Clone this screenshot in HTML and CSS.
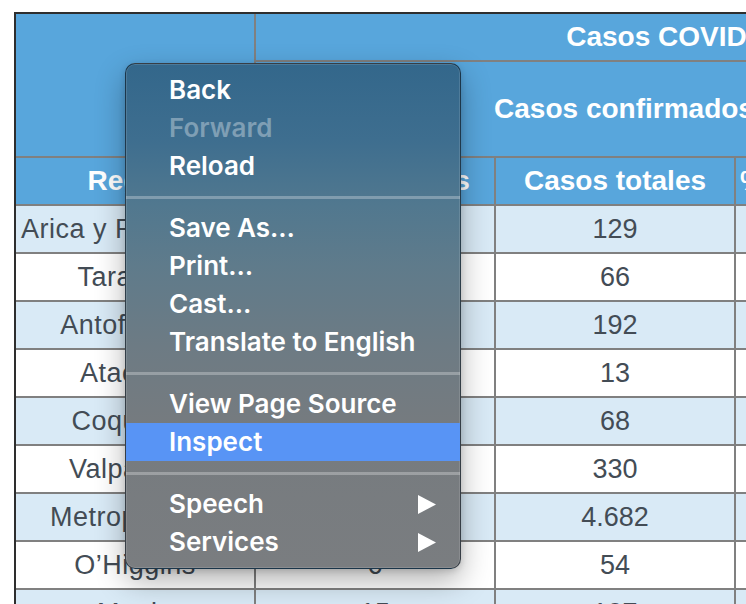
FILE: index.html
```html
<!DOCTYPE html>
<html lang="es">
<head>
<meta charset="utf-8">
<title>Casos COVID-19 en Chile</title>
<link rel="stylesheet" href="styles.css">
</head>
<body>
<table class="covid">
  <colgroup>
    <col class="c-region"><col class="c-std"><col class="c-std"><col class="c-pct"><col class="c-last">
  </colgroup>
  <thead>
    <tr class="row-h">
      <th rowspan="2"></th>
      <th colspan="4">Casos COVID-19 en Chile</th>
    </tr>
    <tr class="row-hh">
      <th colspan="3">Casos confirmados</th>
      <th>Fallecidos</th>
    </tr>
    <tr class="row-h">
      <th>Región</th>
      <th>Casos nuevos</th>
      <th>Casos totales</th>
      <th>% de casos totales</th>
      <th>Total</th>
    </tr>
  </thead>
  <tbody>
    <tr class="alt"><td class="reg">Arica y Parinacota</td><td>3</td><td>129</td><td>2,1</td><td>1</td></tr>
    <tr><td class="reg">Tarapacá</td><td>2</td><td>66</td><td>1,1</td><td>0</td></tr>
    <tr class="alt"><td class="reg">Antofagasta</td><td>12</td><td>192</td><td>3,1</td><td>1</td></tr>
    <tr><td class="reg">Atacama</td><td>0</td><td>13</td><td>0,2</td><td>0</td></tr>
    <tr class="alt"><td class="reg">Coquimbo</td><td>1</td><td>68</td><td>1,1</td><td>0</td></tr>
    <tr><td class="reg">Valparaíso</td><td>9</td><td>330</td><td>5,4</td><td>4</td></tr>
    <tr class="alt"><td class="reg">Metropolitana</td><td>290</td><td>4.682</td><td>76,5</td><td>48</td></tr>
    <tr><td class="reg">O’Higgins</td><td>6</td><td>54</td><td>0,9</td><td>0</td></tr>
    <tr class="alt"><td class="reg">Maule</td><td>15</td><td>107</td><td>1,7</td><td>2</td></tr>
  </tbody>
</table>

<div class="menu">
  <div class="item">Back</div>
  <div class="item disabled">Forward</div>
  <div class="item">Reload</div>
  <div class="sep"></div>
  <div class="item">Save As…</div>
  <div class="item">Print…</div>
  <div class="item">Cast…</div>
  <div class="item">Translate to English</div>
  <div class="sep"></div>
  <div class="item">View Page Source</div>
  <div class="item active">Inspect</div>
  <div class="sep"></div>
  <div class="item">Speech<svg class="arrow" width="18" height="19" viewBox="0 0 18 19"><polygon points="0,0 18,9.5 0,19" fill="#fff"/></svg></div>
  <div class="item">Services<svg class="arrow" width="18" height="19" viewBox="0 0 18 19"><polygon points="0,0 18,9.5 0,19" fill="#fff"/></svg></div>
</div>
</body>
</html>
```
FILE: styles.css
```css
html, body {
  margin: 0;
  padding: 0;
}
body {
  position: relative;
  width: 746px;
  height: 604px;
  overflow: hidden;
  background: #ffffff;
}

.covid {
  margin: 12px 0 0 14px;
  border: 2px solid #2e2e2e;
  border-collapse: separate;
  border-spacing: 0;
  table-layout: fixed;
  width: 1200px;
  font-family: "Liberation Sans", Arial, sans-serif;
}
.c-region, .c-std { width: 240px; }
.c-pct { width: 258px; }
.c-last { width: 222px; }

.covid th,
.covid td {
  padding: 0 4px;
  border-right: 2px solid #808080;
  border-bottom: 2px solid #808080;
  text-align: center;
  white-space: nowrap;
  overflow: hidden;
  line-height: 46px;
}
.covid th {
  background: #58a6dc;
  color: #ffffff;
  font-size: 28px;
  font-weight: bold;
}
.covid .row-hh th {
  line-height: 94px;
}
.covid td {
  font-size: 27px;
  color: #434c55;
  background: #ffffff;
}
.covid td.reg {
  letter-spacing: 0.5px;
  padding: 0;
}
.covid tr.alt td {
  background: #d9eaf6;
}

/* context menu */
.menu {
  position: absolute;
  left: 125px;
  top: 63px;
  width: 336px;
  box-sizing: border-box;
  padding: 7px 0;
  border: 1px solid rgba(10, 20, 30, 0.6);
  border-radius: 10px;
  background: linear-gradient(to bottom,
    #33678b 0%,
    #3e6e8f 15%,
    #51788f 28%,
    #5f7b8b 40%,
    #6d7b84 56%,
    #767b7f 72%,
    #7a7d80 100%);
  box-shadow: inset 0 0 0 1px rgba(255, 255, 255, 0.12),
              0 12px 30px rgba(0, 0, 0, 0.3),
              0 2px 6px rgba(0, 0, 0, 0.15);
  font-family: Inter, "Open Sans", sans-serif;
  font-size: 26px;
  font-weight: 600;
  color: #ffffff;
  overflow: hidden;
}
.item {
  height: 38px;
  line-height: 38px;
  padding: 0 24px 0 43px;
  display: flex;
  align-items: center;
  justify-content: space-between;
  white-space: nowrap;
}
.item.disabled {
  color: rgba(255, 255, 255, 0.35);
}
.item.active {
  background: #5894f5;
}
.arrow {
  display: block;
}
.sep {
  height: 24px;
  display: flex;
  align-items: center;
}
.sep::before {
  content: "";
  display: block;
  width: 100%;
  height: 3px;
  background: rgba(255, 255, 255, 0.28);
}
```
